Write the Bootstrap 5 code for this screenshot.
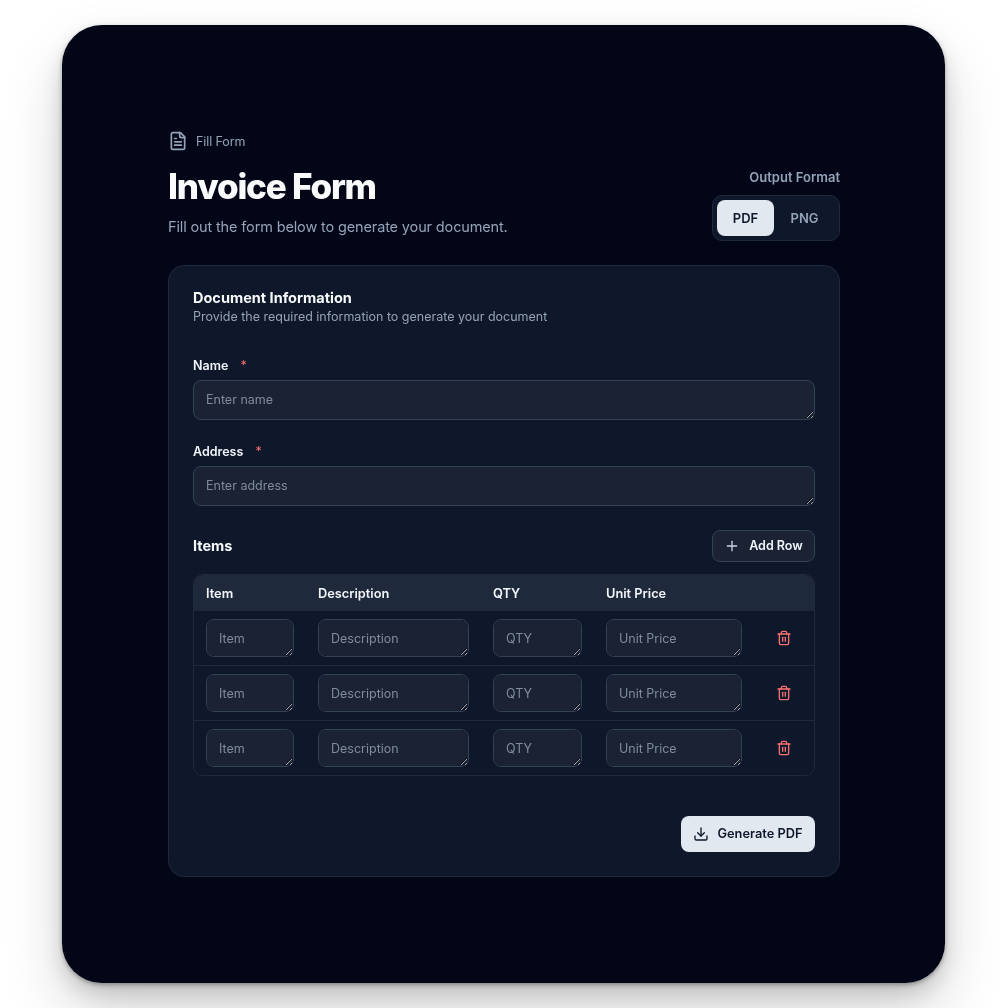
<!DOCTYPE html>
<html lang="en">
<head>
  <meta charset="UTF-8" />
  <meta name="viewport" content="width=device-width, initial-scale=1" />
  <title>Invoice Form</title>

  <link href="https://cdn.jsdelivr.net/npm/bootstrap@5.3.0/dist/css/bootstrap.min.css" rel="stylesheet">

  <style>
    body {
      background: #fff;
      font-family: Inter, "Liberation Sans", sans-serif;
      height: 1008px;
      overflow: hidden;
      padding: 25px 62px 0;
    }
    .janela {
      background: #020617;
      border-radius: 40px;
      height: 958px;
      padding: 106px 105px 0 106px;
      box-shadow: 0 30px 60px rgba(0,0,0,.16), 0 10px 20px rgba(0,0,0,.14), 0 2px 4px rgba(0,0,0,.3);
    }
    .migalha { color: #94a3b8; font-size: 12.5px; line-height: 20px; height: 20px; gap: 8px; margin-bottom: 15px; letter-spacing: -.1px; }
    .migalha span { padding-top: 1px; }
    .titulo { color: #f8fafc; font-size: 35px; font-weight: 800; line-height: 40px; letter-spacing: -1.2px; margin: 0 0 9px; }
    .subtitulo { color: #94a3b8; font-size: 14.5px; line-height: 24px; margin: 0 0 2px; letter-spacing: -.14px; }
    .formato-label { color: #94a3b8; font-size: 13px; font-weight: 600; line-height: 16px; margin-bottom: 10px; }
    .formato { background: #0f172a; border: 1px solid #1e293b; border-radius: 10px; padding: 4px; height: 46px; }
    .formato button { border: 0; background: transparent; color: #94a3b8; font-size: 13px; font-weight: 600; border-radius: 8px; width: 61px; height: 36px; padding: 1px 0 0; }
    .formato button.ativo { background: #e2e8f0; color: #0f172a; width: 57px; }
    .painel { background: #0f172a; border: 1px solid #1e293b; border-radius: 16px; padding: 24px; height: 612px; margin-top: 24px; }
    .painel-titulo { color: #f8fafc; font-size: 14.5px; font-weight: 700; line-height: 15px; margin: 0 0 2px; }
    .painel-sub { color: #94a3b8; font-size: 12.5px; line-height: 20px; margin: 0 0 29px; }
    .rotulo { color: #f1f5f9; font-size: 12.5px; font-weight: 600; line-height: 20px; margin-bottom: 4px; display: block; }
    .rotulo span { color: #f87171; margin-left: 9px; font-weight: 400; }
    textarea.campo {
      display: block;
      width: 100%;
      background-color: #1a2234;
      border: 1px solid #334155;
      border-radius: 8px;
      color: #f1f5f9;
      font-family: inherit;
      font-size: 12.5px;
      line-height: 20px;
      padding: 9px 12px;
      outline: 0;
    }
    textarea.campo::placeholder { color: #808b9e; opacity: 1; }
    .campo-grande { height: 40px; margin-bottom: 22px; }
    .itens-topo { margin-top: 24px; }
    .itens-titulo { color: #f8fafc; font-size: 14.5px; font-weight: 700; margin: 0; }
    .btn-linha { background: #1a2234; border: 1px solid #334155; border-radius: 8px; color: #f1f5f9; font-size: 12.5px; font-weight: 600; height: 32px; width: 103px; padding: 0; gap: 9px; }
    .caixa-tabela { border: 1px solid #1e293b; border-radius: 10px; overflow: hidden; margin-top: 12px; }
    .tabela { width: 100%; table-layout: fixed; border-collapse: collapse; }
    .tabela th { background: #1e293b; color: #f1f5f9; font-size: 12.8px; font-weight: 600; height: 36px; padding: 1px 12px 0; }
    .tabela td { padding: 8px 12px; height: 54px; border-top: 1px solid #1e293b; vertical-align: middle; }
    .tabela tbody tr:first-child td { border-top: 0; }
    .tabela textarea.campo { height: 38px; }
    .tabela svg { display: block; margin: 0 auto; }
    .btn-gerar { background: #e2e8f0; border: 0; border-radius: 8px; color: #0f172a; font-size: 12.8px; font-weight: 600; height: 36px; width: 134px; padding: 0; gap: 8px; margin-top: 40px; }
  </style>
</head>
<body>

  <div class="janela">
    <div class="d-flex justify-content-between align-items-end">
      <div>
        <div class="migalha d-flex align-items-center">
          <svg width="20" height="20" viewBox="0 0 24 24" fill="none" stroke="#94a3b8" stroke-width="2" stroke-linecap="round" stroke-linejoin="round"><path d="M15 2H6a2 2 0 0 0-2 2v16a2 2 0 0 0 2 2h12a2 2 0 0 0 2-2V7Z"/><path d="M14 2v4a2 2 0 0 0 2 2h4"/><path d="M10 9H8"/><path d="M16 13H8"/><path d="M16 17H8"/></svg>
          <span>Fill Form</span>
        </div>
        <h1 class="titulo">Invoice Form</h1>
        <p class="subtitulo">Fill out the form below to generate your document.</p>
      </div>
      <div class="d-flex flex-column align-items-end">
        <div class="formato-label">Output Format</div>
        <div class="formato d-flex">
          <button type="button" class="ativo">PDF</button>
          <button type="button">PNG</button>
        </div>
      </div>
    </div>

    <div class="painel">
      <h2 class="painel-titulo">Document Information</h2>
      <p class="painel-sub">Provide the required information to generate your document</p>

      <label class="rotulo">Name <span>*</span></label>
      <textarea class="campo campo-grande" placeholder="Enter name"></textarea>

      <label class="rotulo">Address <span>*</span></label>
      <textarea class="campo campo-grande" placeholder="Enter address"></textarea>

      <div class="itens-topo d-flex justify-content-between align-items-center">
        <h3 class="itens-titulo">Items</h3>
        <button type="button" class="btn-linha d-flex align-items-center justify-content-center">
          <svg width="16" height="16" viewBox="0 0 24 24" fill="none" stroke="#cbd5e1" stroke-width="2" stroke-linecap="round" stroke-linejoin="round"><path d="M5 12h14"/><path d="M12 5v14"/></svg>
          Add Row
        </button>
      </div>

      <div class="caixa-tabela">
        <table class="tabela">
          <colgroup><col style="width:112px"><col style="width:175px"><col style="width:113px"><col style="width:160px"><col></colgroup>
          <thead>
            <tr><th>Item</th><th>Description</th><th>QTY</th><th>Unit Price</th><th></th></tr>
          </thead>
          <tbody id="linhas"></tbody>
        </table>
      </div>

      <div class="d-flex justify-content-end">
        <button type="button" class="btn-gerar d-flex align-items-center justify-content-center">
          <svg width="16" height="16" viewBox="0 0 24 24" fill="none" stroke="#0f172a" stroke-width="2" stroke-linecap="round" stroke-linejoin="round"><path d="M21 15v4a2 2 0 0 1-2 2H5a2 2 0 0 1-2-2v-4"/><polyline points="7 10 12 15 17 10"/><line x1="12" y1="15" x2="12" y2="3"/></svg>
          Generate PDF
        </button>
      </div>
    </div>
  </div>

  <script>
    let lixeira = '<svg width="16" height="16" viewBox="0 0 24 24" fill="none" stroke="#f87171" stroke-width="2" stroke-linecap="round" stroke-linejoin="round"><path d="M3 6h18"/><path d="M19 6v14a2 2 0 0 1-2 2H7a2 2 0 0 1-2-2V6"/><path d="M8 6V4a2 2 0 0 1 2-2h4a2 2 0 0 1 2 2v2"/><line x1="10" y1="11" x2="10" y2="17"/><line x1="14" y1="11" x2="14" y2="17"/></svg>';
    let colunas = ["Item", "Description", "QTY", "Unit Price"];
    let html = "";
    for (let i = 0; i < 3; i++) {
      html += "<tr>";
      colunas.forEach(function (c) {
        html += '<td><textarea class="campo" placeholder="' + c + '"></textarea></td>';
      });
      html += "<td>" + lixeira + "</td></tr>";
    }
    document.getElementById("linhas").innerHTML = html;
  </script>

  <script src="https://cdn.jsdelivr.net/npm/bootstrap@5.3.0/dist/js/bootstrap.bundle.min.js"></script>
</body>
</html>
